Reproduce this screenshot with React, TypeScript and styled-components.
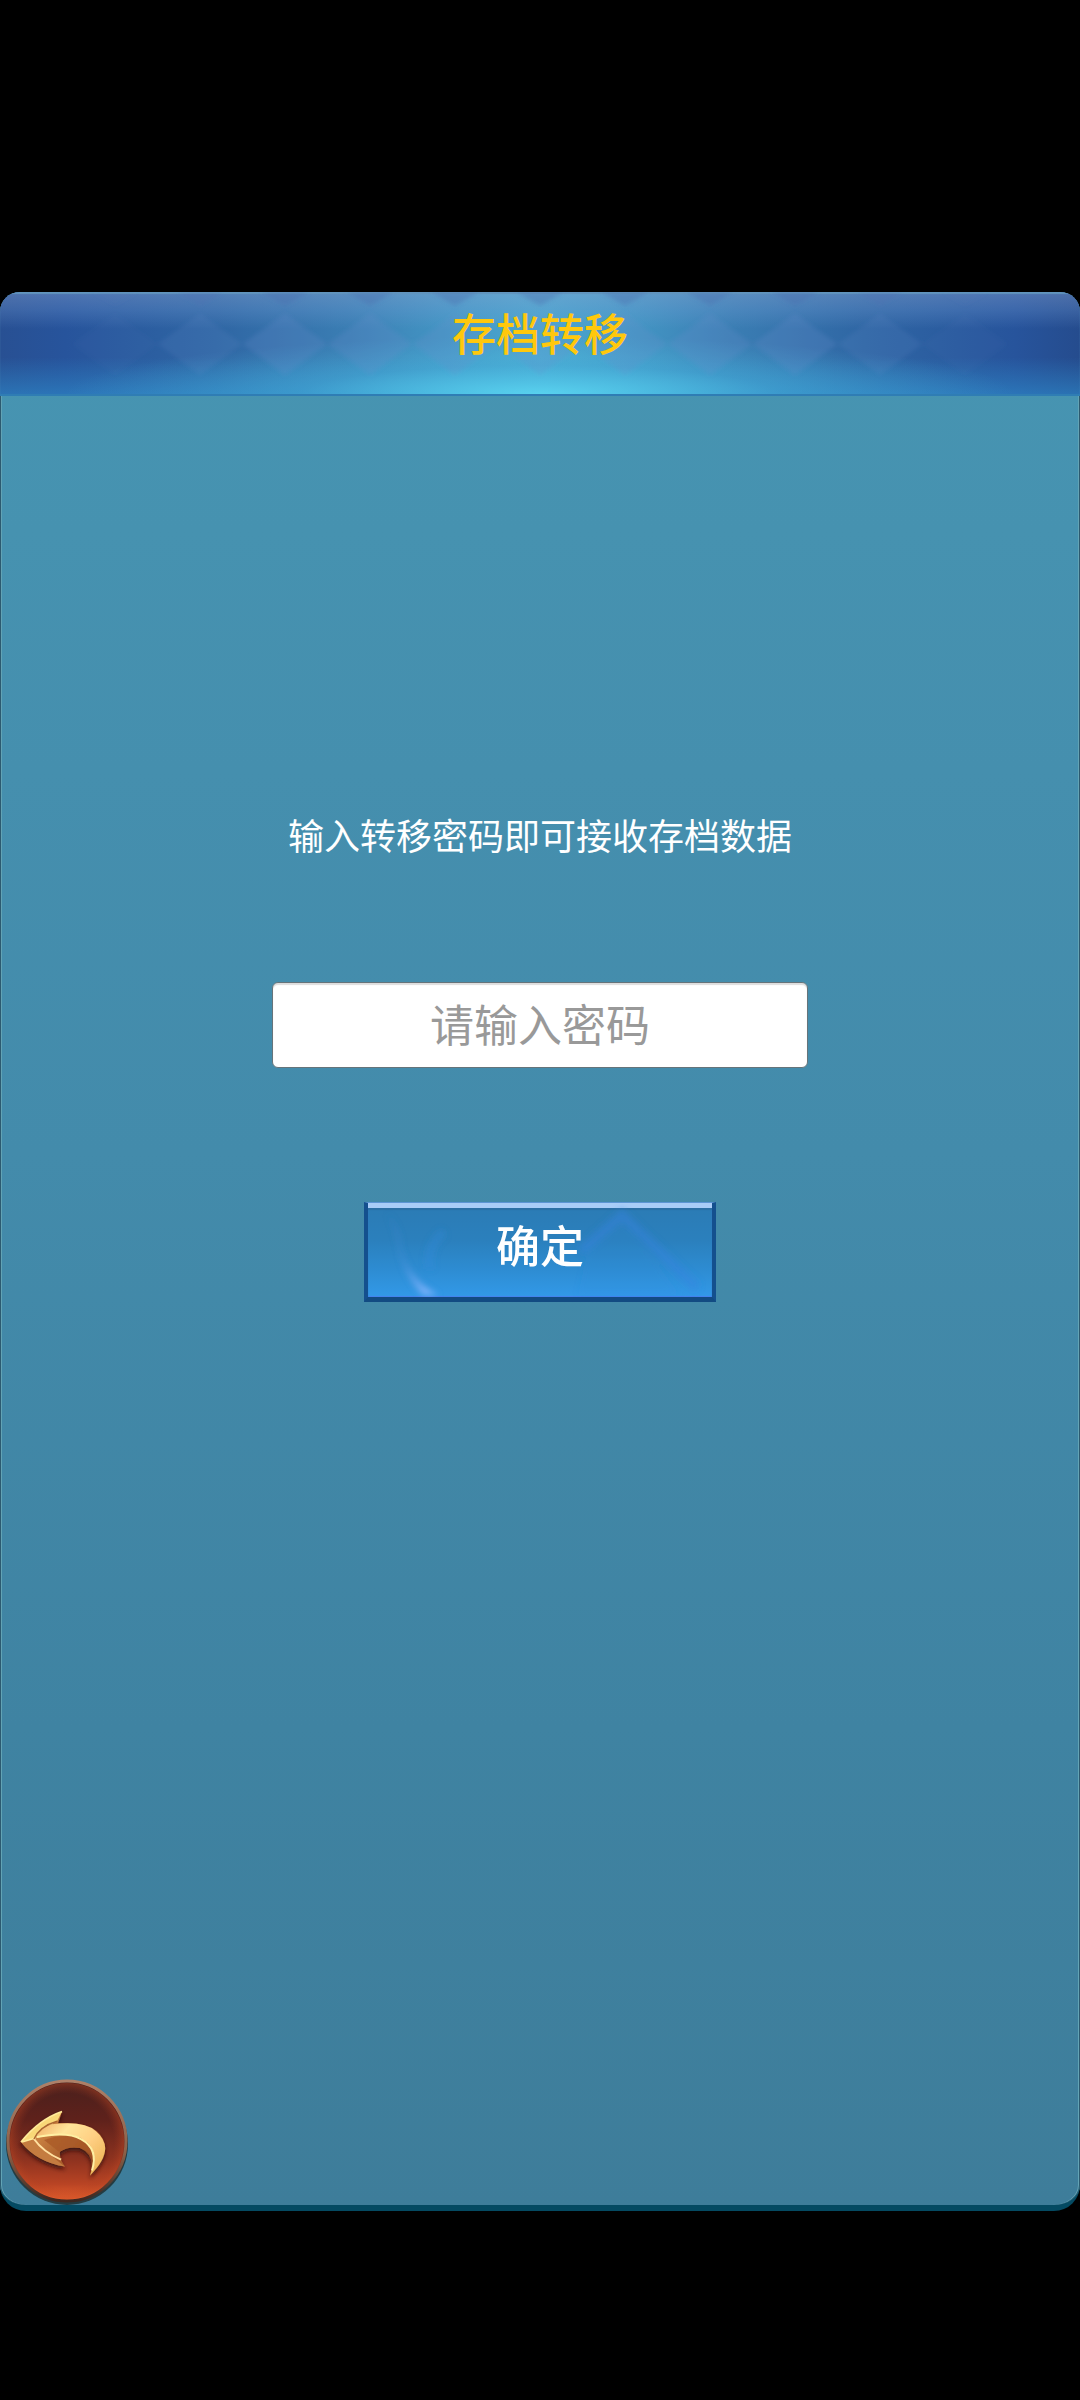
import React, { useState } from "react";
import styled, { createGlobalStyle } from "styled-components";

const GlobalStyle = createGlobalStyle`
  * { box-sizing: border-box; }
  body {
    margin: 0;
    background: #000;
    font-family: "Noto Sans CJK SC", "Noto Sans", sans-serif;
  }
`;

const Screen = styled.div`
  display: flex;
  flex-direction: column;
  min-height: 100vh;
  padding: 292px 0 189px;
  background: #000;
`;

const Panel = styled.main`
  flex: 1;
  display: flex;
  flex-direction: column;
  overflow: hidden;
  border-radius: 20px 20px 26px 26px;
  border-bottom: 6px solid #044a62;
  background: linear-gradient(#4795b2, #458fae 25%, #438bab 45%, #3f83a2 75%, #3e7d9a);
  box-shadow: inset 1px 0 0 #2c5a70, inset -1px 0 0 #2c5a70, inset 2px 0 0 #62a3b5, inset -2px 0 0 #62a3b5;
`;

const Header = styled.header`
  position: relative;
  display: flex;
  justify-content: center;
  height: 104px;
  padding-top: 16px;
  border-bottom: 2px solid #2f7db4;
  box-shadow: inset 0 2px 1px #6194bd;
  background:
    linear-gradient(rgba(140, 165, 210, 0.4), rgba(120, 160, 215, 0.26) 18%, rgba(80, 150, 215, 0) 36%),
    radial-gradient(ellipse 44% 56% at 50% 100%, rgba(92, 216, 242, 0.9), rgba(76, 190, 226, 0.4) 50%, rgba(70, 170, 220, 0)),
    linear-gradient(rgba(44, 130, 200, 0) 64%, rgba(46, 138, 202, 0.6)),
    linear-gradient(90deg, #285093, #27549c 6%, #2f66a4 20%, #3a7db3 32%, #459ac7 43%, #4ba6ce 50%, #459ac7 57%, #3a7db3 68%, #2f66a4 80%, #27549c 94%, #254c8e);
`;

const HeaderPattern = styled.svg`
  position: absolute;
  inset: 0;
  width: 100%;
  height: 100%;
`;

const Title = styled.h1`
  position: relative;
  margin: 0;
  color: #ffc80c;
  font-size: 44px;
  font-weight: 500;
  line-height: 48px;
`;

const TransferForm = styled.form`
  display: flex;
  flex-direction: column;
  align-items: center;
  padding: 416px 24px 48px;
`;

const Prompt = styled.label`
  color: #fff;
  font-size: 36px;
  line-height: 44px;
  text-align: center;
`;

const CodeInput = styled.input`
  width: 100%;
  max-width: 536px;
  height: 86px;
  margin: 126px 0 134px;
  padding: 0 16px 4px;
  border: 1px solid #66747a;
  border-radius: 6px;
  background: #fff;
  box-shadow: inset 0 2px 1px #ddd;
  color: #333;
  font: inherit;
  font-size: 44px;
  text-align: center;
  outline: none;
  &::placeholder { color: #999; opacity: 1; }
`;

const ConfirmButton = styled.button`
  position: relative;
  width: 100%;
  max-width: 352px;
  height: 100px;
  padding: 0 0 12px;
  border: solid;
  border-width: 1px 4px 5px;
  border-color: #5d96d5 #14508e #124b82;
  background: linear-gradient(#2b7bb4, #2b80bd 40%, #2d8bd0 68%, #3299e8);
  box-shadow: inset 0 5px 0 #a9cdf8, inset 0 7px 1px #2c70a6, inset 0 -1px 1px #4581ef;
  color: #fff;
  font: inherit;
  font-size: 44px;
  font-weight: 500;
  line-height: 48px;
  cursor: pointer;
`;

const ButtonArt = styled.svg`
  position: absolute;
  inset: 0;
  width: 100%;
  height: 100%;
`;

const ButtonText = styled.span`
  position: relative;
`;

const Footer = styled.footer`
  margin-top: auto;
  padding-left: 5px;
`;

const BackButton = styled.button`
  display: block;
  width: 124px;
  height: 126px;
  padding: 0;
  border: 0;
  border-radius: 50%;
  background: none;
  cursor: pointer;
  svg { display: block; width: 100%; height: 100%; }
`;

const diamondCentres = [115, 200, 285, 370, 455, 540, 625, 710, 795, 880, 965];

function Diamonds() {
  return (
    <HeaderPattern viewBox="0 0 1080 104" preserveAspectRatio="none" aria-hidden="true">
      <defs>
        <filter id="soften"><feGaussianBlur stdDeviation="2" /></filter>
      </defs>
      <g filter="url(#soften)">
        {diamondCentres.map((x) => {
          const distance = Math.abs(x - 540);
          const opacity = distance > 400 ? 0.05 : distance > 330 ? 0.14 : 0.22;
          return (
            <g key={x}>
              <path d={`M${x} 22L${x + 42} 53L${x} 85L${x - 42} 53Z`} fill="#6b8ecb" opacity={opacity} />
              <path d={`M${x - 24} 0H${x + 24}L${x} 14Z`} fill="#4a6fae" opacity={opacity * 1.8} />
            </g>
          );
        })}
      </g>
    </HeaderPattern>
  );
}

function ButtonGlow() {
  return (
    <ButtonArt viewBox="0 0 344 94" preserveAspectRatio="none" aria-hidden="true">
      <defs>
        <filter id="glow"><feGaussianBlur stdDeviation="3" /></filter>
        <linearGradient id="streak" x1="0" y1="0" x2="0" y2="1">
          <stop offset="0" stopColor="#3b82d2" stopOpacity=".2" />
          <stop offset=".6" stopColor="#4f93e0" stopOpacity=".5" />
          <stop offset="1" stopColor="#8ab8ff" stopOpacity=".95" />
        </linearGradient>
      </defs>
      <g filter="url(#glow)">
        <path d="M19 10Q33 25 33 44Q40 76 70 92L55 92Q36 72 31 47Q27 25 19 10Z" fill="url(#streak)" />
        <path d="M76 29Q58 43 62 66" fill="none" stroke="#348be0" strokeWidth="8" opacity=".35" />
        <path d="M213 48L254 12L329 85" fill="none" stroke="#3583df" strokeWidth="10" opacity=".45" />
        <path d="M254 14L312 92H210L220 46Z" fill="#338be0" opacity=".12" />
      </g>
    </ButtonArt>
  );
}

function BackIcon() {
  return (
    <svg viewBox="0 0 124 128" preserveAspectRatio="none" aria-hidden="true">
      <defs>
        <linearGradient id="disc" x1="0" y1="0" x2="0" y2="1">
          <stop offset="0" stopColor="#49201d" />
          <stop offset=".32" stopColor="#5e211b" />
          <stop offset=".65" stopColor="#8d321f" />
          <stop offset=".86" stopColor="#b94424" />
          <stop offset="1" stopColor="#ed632e" />
        </linearGradient>
        <radialGradient id="discShade">
          <stop offset=".82" stopColor="#a33b20" stopOpacity="0" />
          <stop offset="1" stopColor="#c44b24" stopOpacity=".4" />
        </radialGradient>
        <linearGradient id="rim" x1="0" y1="0" x2="0" y2="1">
          <stop offset="0" stopColor="#ae8068" />
          <stop offset=".6" stopColor="#8a6048" />
          <stop offset="1" stopColor="#3d2720" />
        </linearGradient>
        <linearGradient id="gold" x1="0" y1="0" x2="1" y2=".7">
          <stop offset="0" stopColor="#f2ad65" />
          <stop offset=".35" stopColor="#ffe59a" />
          <stop offset=".68" stopColor="#ffcf83" />
          <stop offset="1" stopColor="#efb85b" />
        </linearGradient>
        <linearGradient id="bronze" x1="0" y1="0" x2="1" y2=".6">
          <stop offset="0" stopColor="#e8a05a" />
          <stop offset=".55" stopColor="#b56b32" />
          <stop offset="1" stopColor="#8e431f" />
        </linearGradient>
        <filter id="shade" x="-20%" y="-20%" width="140%" height="150%">
          <feDropShadow dx="0" dy="3" stdDeviation="2" floodColor="#2c0d08" floodOpacity=".8" />
        </filter>
      </defs>
      <ellipse cx="62" cy="66" rx="61" ry="62" fill="#243c42" />
      <ellipse cx="62" cy="63" rx="59" ry="61" fill="url(#disc)" stroke="url(#rim)" strokeWidth="3" />
      <ellipse cx="62" cy="63" rx="57" ry="59" fill="url(#discShade)" />
      <g filter="url(#shade)">
        <path d="M16 64Q34 41 57 33L53 45Q79 43 92 53Q111 71 85 98Q91 77 75 70Q63 68 55 74Q54 81 60 89Q32 84 16 64Z" fill="url(#bronze)" />
        <path d="M31 60Q35 49 47 46Q79 42 91 53Q112 71 85 98Q94 74 76 60Q59 53 31 60Z" fill="url(#gold)" />
        <path d="M49 59Q71 55 83 65Q93 76 88 91Q91 76 75 70Q63 68 54 74L39 62Z" fill="#a95a28" opacity=".75" />
        <path d="M16 64Q34 41 57 33L52 43Q36 48 29 61Z" fill="#f9d878" />
        <path d="M16 64L29 60Q41 75 60 89Q31 84 16 64Z" fill="#c47b40" />
        <path d="M29 61Q38 74 56 82" fill="none" stroke="#ffe0a0" strokeWidth="2" />
        <path d="M16 64Q34 41 57 33M17 64L30 60Q36 47 48 45" fill="none" stroke="#ffeb9a" strokeWidth="1.5" />
        <path d="M32 59Q62 53 76 61Q94 71 87 93" fill="none" stroke="#fff0a3" strokeWidth="2" />
        <path d="M29 61Q35 48 52 43" fill="none" stroke="#ac6630" strokeWidth="1.5" />
      </g>
    </svg>
  );
}

export default function App() {
  const [code, setCode] = useState("");
  return (
    <>
      <GlobalStyle />
      <Screen>
        <Panel>
          <Header>
            <Diamonds />
            <Title>存档转移</Title>
          </Header>
          <TransferForm onSubmit={(e) => e.preventDefault()}>
            <Prompt htmlFor="transfer-code">输入转移密码即可接收存档数据</Prompt>
            <CodeInput
              id="transfer-code"
              placeholder="请输入密码"
              value={code}
              onChange={(e) => setCode(e.target.value)}
            />
            <ConfirmButton type="submit">
              <ButtonGlow />
              <ButtonText>确定</ButtonText>
            </ConfirmButton>
          </TransferForm>
          <Footer>
            <BackButton type="button" aria-label="返回">
              <BackIcon />
            </BackButton>
          </Footer>
        </Panel>
      </Screen>
    </>
  );
}
